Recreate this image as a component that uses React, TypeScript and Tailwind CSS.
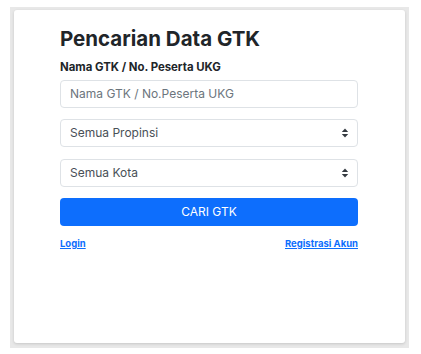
import React from "react";

function Arrows() {
  return (
    <svg width="8" height="10" viewBox="0 0 8 10" className="shrink-0">
      <path d="M4 0.5 L7.2 4 H0.8 Z" fill="#343a40" />
      <path d="M4 9.5 L7.2 6 H0.8 Z" fill="#343a40" />
    </svg>
  );
}

export default function App() {
  return (
    <div
      className="w-[421px] h-[354px] bg-white pt-[7px] pl-[10px]"
      style={{ fontFamily: "Inter, 'Noto Sans', sans-serif" }}
    >
      <div className="w-[399px] h-[341px] bg-[#e8e8e8] pt-[3px] pl-[4px]">
        <div className="w-[391px] h-[333px] bg-white rounded-[3px] shadow-[0_1px_3px_rgba(0,0,0,0.15)] pl-[46px] pr-[47px] pt-[14px]">
          <h1 className="text-[20.5px] leading-[30px] font-bold text-[#212529]">
            Pencarian Data GTK
          </h1>
          <div className="mt-[4px] text-[11.4px] leading-[18px] font-bold text-[#212529]">
            Nama GTK / No. Peserta UKG
          </div>
          <div className="mt-[4px] flex flex-col">
            <div className="h-[28px] border border-[#dee2e6] rounded-[4px] flex items-center px-[9px] text-[12px] text-[#6c757d]">
              Nama GTK / No.Peserta UKG
            </div>
            <div className="mt-[11px] h-[28px] border border-[#dee2e6] rounded-[4px] flex items-center justify-between pl-[9px] pr-[8px] text-[12px] text-[#495057]">
              <span>Semua Propinsi</span>
              <Arrows />
            </div>
            <div className="mt-[12px] h-[28px] border border-[#dee2e6] rounded-[4px] flex items-center justify-between pl-[9px] pr-[8px] text-[12px] text-[#495057]">
              <span>Semua Kota</span>
              <Arrows />
            </div>
            <div className="mt-[11px] h-[28px] bg-[#0d6efd] rounded-[4px] flex items-center justify-center text-[12px] text-white">
              CARI GTK
            </div>
            <div className="mt-[11px] flex justify-between text-[9.5px] font-bold text-[#0d6efd] underline leading-[14px]">
              <span>Login</span>
              <span>Registrasi Akun</span>
            </div>
          </div>
        </div>
      </div>
    </div>
  );
}
